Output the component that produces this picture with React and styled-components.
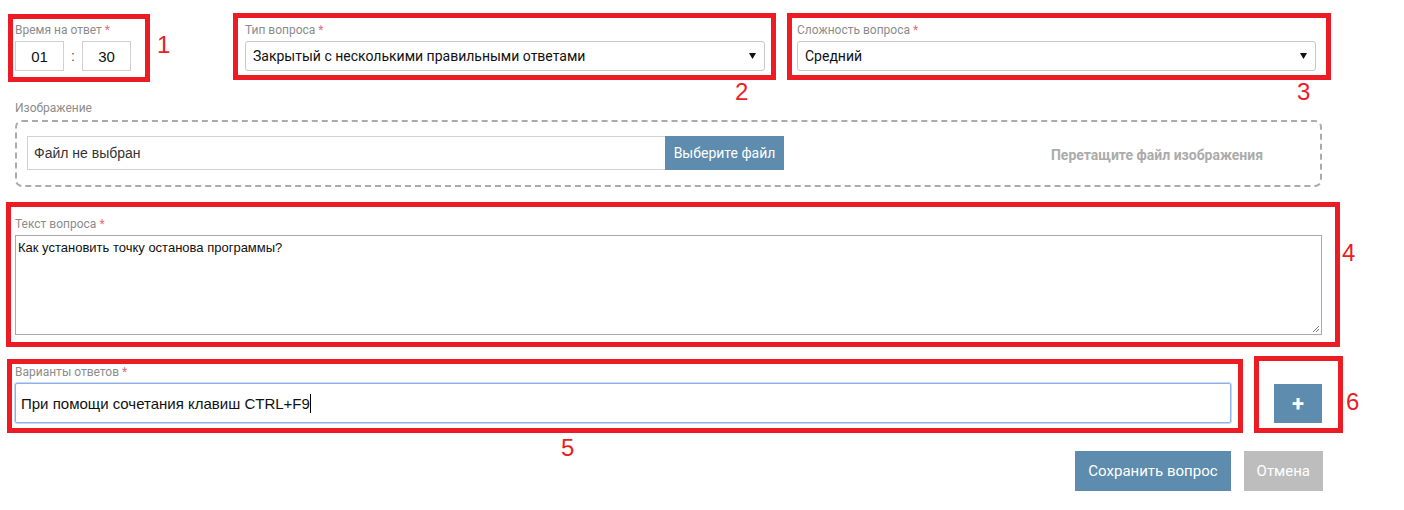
import React from 'react';
import styled, { createGlobalStyle } from 'styled-components';

const GlobalStyle = createGlobalStyle`
  body {
    margin: 0;
    background: #fff;
    font-family: Roboto, "Liberation Sans", sans-serif;
  }
`;

// красные рамки-пометки поверх формы
const marks = [
  { n: 1, box: [8, 14, 142, 68], num: [157, 31] },
  { n: 2, box: [233, 13, 543, 67], num: [735, 78] },
  { n: 3, box: [787, 13, 544, 67], num: [1297, 78] },
  { n: 4, box: [6, 202, 1334, 145], num: [1342, 239] },
  { n: 5, box: [7, 359, 1236, 74], num: [561, 434] },
  { n: 6, box: [1254, 356, 89, 77], num: [1346, 388] },
];

const App = () => (
  <>
    <GlobalStyle />
    <Page>
      <TopRow>
        <Field>
          <Label>
            Время на ответ <Req>*</Req>
          </Label>
          <TimeGroup>
            <TimeInput>01</TimeInput>
            <Colon>:</Colon>
            <TimeInput>30</TimeInput>
          </TimeGroup>
        </Field>
        <Field>
          <Label>
            Тип вопроса <Req>*</Req>
          </Label>
          <Select $width={520}>
            Закрытый с несколькими правильными ответами
            <Arrow />
          </Select>
        </Field>
        <Field>
          <Label>
            Сложность вопроса <Req>*</Req>
          </Label>
          <Select $width={519}>
            Средний
            <Arrow />
          </Select>
        </Field>
      </TopRow>

      <Label $top={30} $gap={5}>
        Изображение
      </Label>
      <DropZone>
        <FilePicker>
          <FileName>Файл не выбран</FileName>
          <FileButton>Выберите файл</FileButton>
        </FilePicker>
        <DropHint>Перетащите файл изображения</DropHint>
      </DropZone>

      <Label $top={30}>
        Текст вопроса <Req>*</Req>
      </Label>
      <TextArea>
        Как установить точку останова программы?
        <ResizeGrip width="9" height="9" viewBox="0 0 9 9">
          <path d="M8 2 L2 8 M8 5 L5 8" stroke="#777" strokeWidth="1" />
        </ResizeGrip>
      </TextArea>

      <Label $top={30}>
        Варианты ответов <Req>*</Req>
      </Label>
      <AnswerRow>
        <AnswerInput>
          При помощи сочетания клавиш CTRL+F9
          <Caret />
        </AnswerInput>
        <AddButton>+</AddButton>
      </AnswerRow>

      <Actions>
        <Button $kind="primary">Сохранить вопрос</Button>
        <Button $kind="muted">Отмена</Button>
      </Actions>

      {marks.map(m => (
        <React.Fragment key={m.n}>
          <MarkBox $x={m.box[0]} $y={m.box[1]} $w={m.box[2]} $h={m.box[3]} />
          <MarkNum $x={m.num[0]} $y={m.num[1]}>
            {m.n}
          </MarkNum>
        </React.Fragment>
      ))}
    </Page>
  </>
);

export default App;

const Arrow = () => (
  <ArrowIcon width="7" height="6" viewBox="0 0 7 6">
    <path d="M0 0 H7 L3.5 6 Z" fill="#111" />
  </ArrowIcon>
);

// Styled Components
const Page = styled.div`
  position: relative;
  width: 1404px;
  height: 510px;
  box-sizing: border-box;
  padding: 23px 0 0 15px;
  overflow: hidden;
`;

const TopRow = styled.div`
  display: grid;
  grid-template-columns: 230px 552px 519px;
`;

const Field = styled.div`
  display: flex;
  flex-direction: column;
`;

const Label = styled.div`
  font-size: 12px;
  line-height: 14px;
  color: #8c8c8c;
  margin-top: ${p => p.$top || 0}px;
  margin-bottom: ${p => (p.$gap != null ? p.$gap : 4)}px;
`;

const Req = styled.span`
  color: #e0707a;
`;

const TimeGroup = styled.div`
  display: flex;
  align-items: center;
`;

const TimeInput = styled.div`
  width: 49px;
  height: 30px;
  box-sizing: border-box;
  border: 1px solid #d0d0d0;
  display: flex;
  align-items: center;
  justify-content: center;
  font-family: "Liberation Sans", Arial, sans-serif;
  font-size: 15px;
  color: #111;
`;

const Colon = styled.span`
  width: 18px;
  text-align: center;
  font-size: 14px;
  color: #555;
`;

const Select = styled.div`
  width: ${p => p.$width}px;
  height: 30px;
  box-sizing: border-box;
  border: 1px solid #c8c8c8;
  border-radius: 3px;
  padding: 0 8px 0 7px;
  display: flex;
  align-items: center;
  justify-content: space-between;
  font-family: Roboto, "Liberation Sans", sans-serif;
  font-size: 14px;
  color: #111;
`;

const ArrowIcon = styled.svg`
  display: block;
  flex: none;
`;

const DropZone = styled.div`
  width: 1307px;
  height: 67px;
  box-sizing: border-box;
  border: 2px dashed #ababab;
  border-radius: 7px;
  padding: 14px 0 0 10px;
  display: flex;
  align-items: flex-start;
`;

const FilePicker = styled.div`
  display: flex;
  height: 34px;
`;

const FileName = styled.div`
  width: 638px;
  box-sizing: border-box;
  border: 1px solid #d2d2d2;
  border-right: none;
  padding-left: 6px;
  display: flex;
  align-items: center;
  font-family: "Liberation Sans", Arial, sans-serif;
  font-size: 14px;
  color: #333;
`;

const FileButton = styled.div`
  width: 119px;
  background: #5d8cae;
  color: #fff;
  font-size: 14px;
  display: flex;
  align-items: center;
  justify-content: center;
`;

const DropHint = styled.div`
  margin-left: auto;
  width: 326px;
  height: 34px;
  line-height: 38px;
  text-align: center;
  font-size: 14px;
  font-weight: 700;
  color: #ababab;
`;

const TextArea = styled.div`
  position: relative;
  width: 1307px;
  height: 100px;
  box-sizing: border-box;
  border: 1px solid #a9a9a9;
  padding: 4px 2px;
  font-family: "Liberation Sans", Arial, sans-serif;
  font-size: 13px;
  color: #111;
`;

const ResizeGrip = styled.svg`
  position: absolute;
  right: 1px;
  bottom: 1px;
`;

const AnswerRow = styled.div`
  display: flex;
  align-items: flex-start;
  gap: 43px;
  width: 1307px;
`;

const AnswerInput = styled.div`
  flex: 1;
  height: 40px;
  box-sizing: border-box;
  border: 1px solid #8fb1e6;
  box-shadow: 0 0 0 1px #c7d8f3;
  border-radius: 2px;
  padding-left: 5px;
  display: flex;
  align-items: center;
  font-family: "Liberation Sans", Arial, sans-serif;
  font-size: 15px;
  color: #111;
`;

const Caret = styled.span`
  display: inline-block;
  width: 1px;
  height: 19px;
  background: #000;
`;

const AddButton = styled.div`
  width: 48px;
  height: 39px;
  margin-top: 1px;
  background: #5d8cae;
  color: #fff;
  font-size: 22px;
  font-weight: 700;
  display: flex;
  align-items: center;
  justify-content: center;
`;

const Actions = styled.div`
  width: 1308px;
  margin-top: 28px;
  display: flex;
  justify-content: flex-end;
  gap: 13px;
`;

const Button = styled.div`
  height: 40px;
  padding: 0 13px;
  display: flex;
  align-items: center;
  font-size: 15px;
  color: #fff;
  background: ${p => (p.$kind === 'primary' ? '#5d8cae' : '#bdbdbd')};
`;

const MarkBox = styled.div`
  position: absolute;
  left: ${p => p.$x}px;
  top: ${p => p.$y}px;
  width: ${p => p.$w}px;
  height: ${p => p.$h}px;
  box-sizing: border-box;
  border: 5px solid #ed1c24;
  pointer-events: none;
`;

const MarkNum = styled.div`
  position: absolute;
  left: ${p => p.$x}px;
  top: ${p => p.$y}px;
  font-family: "Liberation Sans", Arial, sans-serif;
  font-size: 24px;
  line-height: 28px;
  color: #ed1c24;
`;
